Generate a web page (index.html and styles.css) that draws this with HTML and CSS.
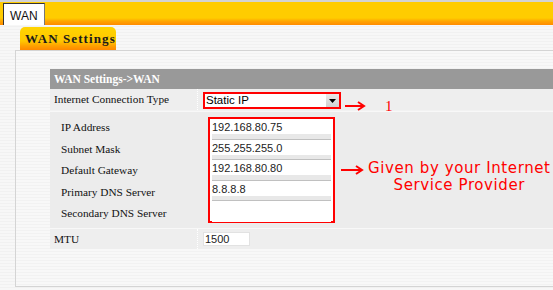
FILE: index.html
```html
<!DOCTYPE html>
<html>
<head>
<meta charset="utf-8">
<link rel="stylesheet" href="styles.css">
</head>
<body>
<div class="topbar">
  <div class="top-tab">WAN</div>
</div>
<div class="subtabs">
  <div class="subtab">WAN Settings</div>
</div>
<div class="panel">
  <div class="hdr">WAN Settings-&gt;WAN</div>
  <div class="row type-row">
    <div class="lbl">Internet Connection Type</div>
    <div class="val">
      <div class="select"><span class="sel-text">Static IP</span><span class="sel-btn"><svg width="7" height="4" viewBox="0 0 7 4"><path d="M0 0H7L3.5 4Z" fill="#000"/></svg></span></div>
    </div>
  </div>
  <div class="group">
    <div class="labels">
      <div class="glbl">IP Address</div>
      <div class="glbl">Subnet Mask</div>
      <div class="glbl">Default Gateway</div>
      <div class="glbl">Primary DNS Server</div>
      <div class="glbl">Secondary DNS Server</div>
    </div>
    <div class="inputs">
      <div class="inp">192.168.80.75</div>
      <div class="inp">255.255.255.0</div>
      <div class="inp">192.168.80.80</div>
      <div class="inp">8.8.8.8</div>
      <div class="inp last"></div>
    </div>
  </div>
  <div class="row mtu-row">
    <div class="lbl">MTU</div>
    <div class="val"><div class="mtu">1500</div></div>
  </div>
</div>
<div class="note note1">
  <svg width="22" height="10" viewBox="0 0 22 10"><path d="M1 5H20M14 1L20 5L14 9" stroke="#f00" stroke-width="2" fill="none"/></svg>
  <span class="one">1</span>
</div>
<div class="note note2">
  <svg width="24" height="10" viewBox="0 0 24 10"><path d="M1 5H22M16 1L22 5L16 9" stroke="#f00" stroke-width="2" fill="none"/></svg>
  <span class="given">Given by your Internet<br>Service Provider</span>
</div>
</body>
</html>
```
FILE: styles.css
```css
* { box-sizing: border-box; }
html, body { margin: 0; padding: 0; }
body {
  width: 553px;
  height: 290px;
  overflow: hidden;
  position: relative;
  font-family: "Liberation Serif", serif;
  background: repeating-linear-gradient(to bottom, #f7f7f7 0, #f7f7f7 2px, #f1f1f1 2px, #f1f1f1 3px);
}
.topbar {
  height: 25px;
  border-top: 2px solid #d3d3d3;
  background: linear-gradient(to bottom, #ffcc00 0, #ffcc00 16px, #ffa600 19px, #ff8a00 23px);
  padding-left: 3px;
  padding-top: 1px;
}
.top-tab {
  width: 42px;
  height: 22px;
  background: #fff;
  border: 1px solid #333;
  border-right-color: #777;
  border-bottom: none;
  font-family: "Liberation Sans", sans-serif;
  font-size: 12px;
  color: #111;
  padding: 5px 0 0 6px;
}
.subtabs {
  padding: 2px 0 0 20px;
  height: 50px;
  margin-bottom: -25px;
}
.subtab {
  width: 96px;
  height: 23px;
  border-radius: 5px 5px 0 0;
  background: linear-gradient(to bottom, #ffd400 0, #ffc800 14px, #ffa000 19px, #ff8800 23px);
  font-weight: bold;
  font-size: 13px;
  letter-spacing: 1.1px;
  color: #1a1a1a;
  padding: 4px 0 0 5px;
}
.panel {
  margin-left: 15px;
  height: 237px;
  border: 1px solid #d4d4d4;
  border-right: none;
  margin-top: -2px;
  padding: 18px 0 0 34px;
  background: repeating-linear-gradient(to bottom, #f8f8f8 0, #f8f8f8 2px, #f2f2f2 2px, #f2f2f2 3px);
}
.hdr {
  height: 20px;
  background: #999;
  color: #fff;
  font-weight: bold;
  font-size: 11.5px;
  padding: 4px 0 0 4px;
}
.row {
  display: flex;
  height: 21px;
  background: #eeeeee;
  font-size: 11.3px;
  color: #111;
}
.row .lbl {
  width: 148px;
  padding: 4px 0 0 4px;
  border-right: 1px dotted #fff;
}
.row .val {
  flex: 1;
  padding-left: 5px;
  padding-top: 3px;
}
.type-row { margin-bottom: 2px; }
.select {
  width: 138px;
  height: 17px;
  border: 2px solid #f00;
  background: #fff;
  display: flex;
  font-family: "Liberation Sans", sans-serif;
  font-size: 11.5px;
  color: #000;
}
.sel-text { flex: 1; padding: 0 0 0 1px; line-height: 13px; }
.sel-btn {
  width: 13px;
  height: 13px;
  background: linear-gradient(#eaeaea, #d0d0d0);
  display: flex;
  align-items: center;
  justify-content: center;
}
.group {
  display: flex;
  background: #ececec;
  height: 116px;
  padding-top: 5px;
  margin-bottom: 1px;
}
.labels { width: 158px; padding-left: 11px; font-size: 11.3px; color: #111; }
.glbl { height: 21.5px; padding-top: 4px; }
.inputs {
  width: 127px;
  height: 106px;
  border: 2px solid #f00;
  padding: 0 2px;
  background: #fff;
}
.inp {
  height: 20.5px;
  border-bottom: 1px solid #c0c0c0;
  background: linear-gradient(to bottom, #fff 0, #fff 15px, #e8e8e8 15px);
  font-family: "Liberation Sans", sans-serif;
  font-size: 11px;
  color: #222;
  padding: 2px 0 0 0;
}
.inp.last { border-bottom: none; background: #fff; }
.mtu-row { height: 20px; }
.mtu-row .val { padding-left: 5px; padding-top: 3px; }
.mtu {
  width: 47px;
  height: 14px;
  background: #fff;
  border: 1px solid #e2e2e2;
  font-family: "Liberation Sans", sans-serif;
  font-size: 11px;
  color: #222;
  line-height: 12px;
  padding-left: 1px;
}
.note { position: absolute; display: flex; color: #f00; }
.note1 { left: 344px; top: 96px; align-items: center; }
.one { font-family: "Liberation Serif", serif; font-size: 15px; margin-left: 19px; margin-top: 2px; }
.note2 { left: 340px; top: 160px; align-items: flex-start; }
.note2 svg { margin-top: 5px; }
.given {
  font-family: "DejaVu Sans", sans-serif;
  font-size: 15px;
  letter-spacing: 0.6px;
  line-height: 17px;
  text-align: center;
  margin-left: 4px;
}
```
